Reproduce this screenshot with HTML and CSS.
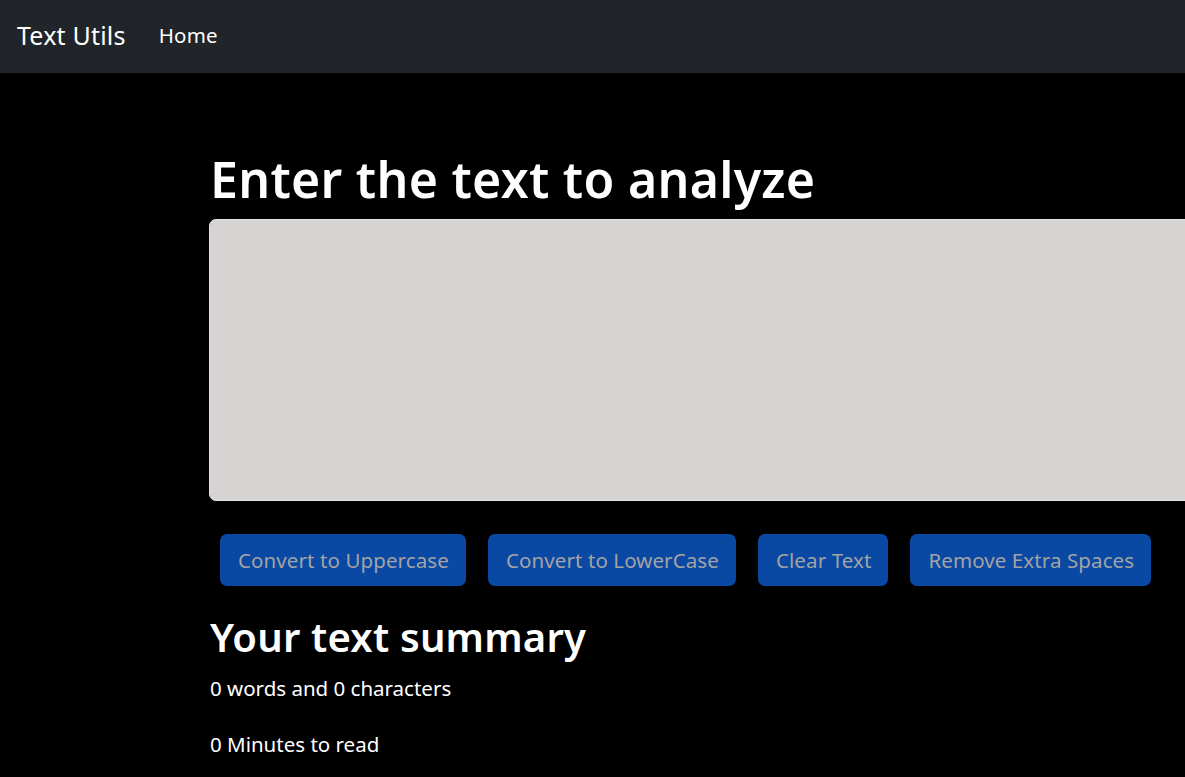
FILE: index.html
```html
<!DOCTYPE html>
<html lang="en">
<head>
<meta charset="utf-8">
<title>Text Utils</title>
<link rel="stylesheet" href="styles.css">
</head>
<body>
<nav class="navbar">
  <a class="brand" href="#">Text Utils</a>
  <a class="nav-link" href="#">Home</a>
</nav>
<main class="container">
  <h1 class="title">Enter the text to analyze</h1>
  <textarea class="text-box" id="myBox"></textarea>
  <div class="actions">
    <button class="btn">Convert to Uppercase</button>
    <button class="btn">Convert to LowerCase</button>
    <button class="btn">Clear Text</button>
    <button class="btn">Remove Extra Spaces</button>
  </div>
  <h2 class="subtitle">Your text summary</h2>
  <p class="stat">0 words and 0 characters</p>
  <p class="stat">0 Minutes to read</p>
</main>
</body>
</html>
```

FILE: styles.css
```css
* { box-sizing: border-box; }
html, body { margin: 0; padding: 0; }
body {
  background: #000;
  color: #fff;
  font-family: "Noto Sans", "Open Sans", sans-serif;
  font-size: 20px;
  line-height: 1.5;
  overflow: hidden;
  width: 1185px;
  height: 777px;
}
.navbar {
  height: 73px;
  background: #212529;
  display: flex;
  align-items: center;
  padding-left: 17px;
}
.brand {
  color: #fff;
  text-decoration: none;
  font-size: 25px;
  letter-spacing: 0.2px;
  margin-right: 33px;
  padding-bottom: 2px;
}
.nav-link {
  color: #fff;
  text-decoration: none;
  font-size: 20.5px;
  letter-spacing: 0.2px;
  padding-bottom: 2px;
}
.container {
  padding-left: 209px;
  padding-top: 76px;
}
.title {
  margin: 0 0 10px 1px;
  font-size: 50px;
  font-weight: 600;
  line-height: 1.2;
  letter-spacing: 0.3px;
}
.text-box {
  display: block;
  width: 1100px;
  height: 282px;
  background: #d8d3d3;
  border: 1px solid #dee2e6;
  border-radius: 7px;
  resize: none;
  margin: 0;
  font: inherit;
}
.actions {
  display: flex;
  gap: 22px;
  margin: 33px 0 0 11px;
}
.btn {
  height: 52px;
  padding: 0 17px 0 18px;
  background: #0948a3;
  color: #a3a3a3;
  border: none;
  border-radius: 7px;
  font: inherit;
  font-size: 20.5px;
  letter-spacing: 0.1px;
}
.subtitle {
  margin: 27px 0 12px 1px;
  font-size: 40px;
  font-weight: 600;
  line-height: 1.2;
  letter-spacing: 0.2px;
}
.stat {
  margin: 0 0 25px 1px;
  font-size: 20.5px;
  letter-spacing: 0;
}
```
